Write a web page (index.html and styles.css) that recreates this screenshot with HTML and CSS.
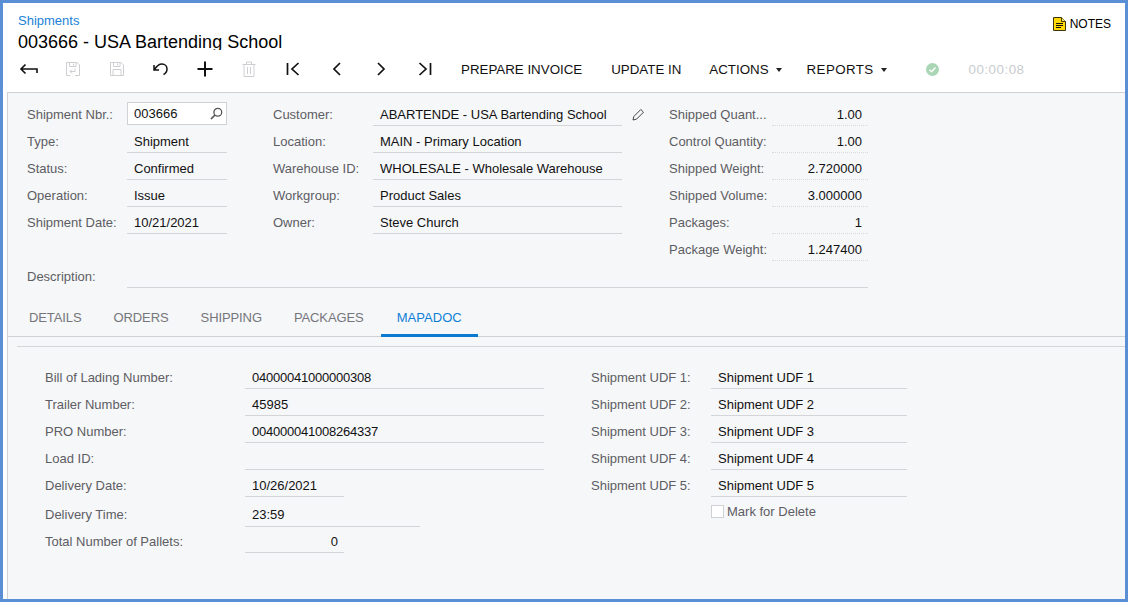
FILE: index.html
```html
<!DOCTYPE html>
<html lang="en">
<head>
<meta charset="utf-8">
<title>Shipments</title>
<link rel="stylesheet" href="styles.css">
</head>
<body>
<div class="frame">
  <header class="head">
    <div class="titles">
      <a class="crumb">Shipments</a>
      <h1 class="title">003666 - USA Bartending School</h1>
    </div>
    <div class="notes">
      <svg class="notes-icon" width="13" height="14" viewBox="0 0 13 14"><path d="M.5.5h8l4 4v9H.5z" fill="#ffd800" stroke="#3d3410"/><path d="M8.500.5v4h4" fill="#ffe95c" stroke="#3d3410"/><path d="M3 6.500h7M3 8.500h7M3 10.500h5" stroke="#111" fill="none"/></svg>
      <span>NOTES</span>
    </div>
  </header>
  <div class="toolbar">
    <span class="tool t1"><svg width="20" height="16" viewBox="0 0 20 16" fill="none" stroke="#111" stroke-width="1.600"><path d="M2 8h16v4M6.500 3.500 2 8l4.500 4.500"/></svg></span>
    <span class="tool t2"><svg width="16" height="16" viewBox="0 0 16 16" fill="none" stroke="#cfcdd2"><path d="M5.500 14.500H1.500V1.500H12L14.500 4V14.500H10M4.500 1.500V5.500H11V1.500M8.500 2.500V4.500M5 10.500H10V7.500M5 10.500L7 8.500M5 10.500L7 12.500"/></svg></span>
    <span class="tool t3"><svg width="16" height="16" viewBox="0 0 16 16" fill="none" stroke="#cfcdd2"><path d="M1.500 1.500H12L14.500 4V14.500H1.500ZM4.500 1.500V5.500H11V1.500M8.500 2.500V4.500M4 14.500V8.500H12V14.500"/></svg></span>
    <span class="tool t4"><svg width="18" height="16" viewBox="0 0 18 16" fill="none" stroke="#111" stroke-width="1.500"><path d="M2 4v5h5M2.500 8.500C5 4.500 7.500 3 10 3c3 0 5 2.200 5 5s-1.500 4.500-3.500 5.500"/></svg></span>
    <span class="tool t5"><svg width="16" height="16" viewBox="0 0 16 16" stroke="#111" stroke-width="2"><path d="M8 0.500V15.500M0.500 8H15.500"/></svg></span>
    <span class="tool t6"><svg width="14" height="16" viewBox="0 0 14 16" fill="none" stroke="#cfcdd2"><path d="M.5 3.500h13M4.500 3.500v-2.500h5v2.500M2 3.500v12h10v-12M5.500 6v7M8.500 6v7"/></svg></span>
    <span class="tool t7"><svg width="14" height="14" viewBox="0 0 14 14" fill="none" stroke="#111" stroke-width="1.700"><path d="M1.500 1V13M12.500 1 6 7l6.500 6"/></svg></span>
    <span class="tool t8"><svg width="10" height="14" viewBox="0 0 10 14" fill="none" stroke="#111" stroke-width="1.700"><path d="M8 1 2 7l6 6"/></svg></span>
    <span class="tool t9"><svg width="10" height="14" viewBox="0 0 10 14" fill="none" stroke="#111" stroke-width="1.700"><path d="M2 1l6 6-6 6"/></svg></span>
    <span class="tool t10"><svg width="14" height="14" viewBox="0 0 14 14" fill="none" stroke="#111" stroke-width="1.700"><path d="M12.500 1V13M1.500 1 8 7l-6.500 6"/></svg></span>
    <span class="cmd c1">PREPARE INVOICE</span>
    <span class="cmd c2">UPDATE IN</span>
    <span class="cmd c3">ACTIONS<i class="caret"></i></span>
    <span class="cmd c4">REPORTS<i class="caret"></i></span>
    <svg class="status" width="13" height="13" viewBox="0 0 13 13"><circle cx="6.500" cy="6.500" r="6.500" fill="#a9d6b4"/><path d="M3.500 6.800 5.600 8.800 9.500 4.500" fill="none" stroke="#fff" stroke-width="1.500"/></svg>
    <span class="timer">00:00:08</span>
  </div>

  <main class="panel">
    <section class="summary">
      <div class="col col-a">
        <div class="row"><label class="lbl">Shipment Nbr.:</label><div class="search"><span>003666</span><svg width="13" height="13" viewBox="0 0 13 13" fill="none" stroke="#555" stroke-width="1.300"><circle cx="7.800" cy="5.200" r="3.900"/><path d="M5 8 1 12" stroke-width="1.700"/></svg></div></div>
        <div class="row"><label class="lbl">Type:</label><div class="val">Shipment</div></div>
        <div class="row"><label class="lbl">Status:</label><div class="val">Confirmed</div></div>
        <div class="row"><label class="lbl">Operation:</label><div class="val">Issue</div></div>
        <div class="row"><label class="lbl">Shipment Date:</label><div class="val">10/21/2021</div></div>
      </div>
      <div class="col col-b">
        <div class="row"><label class="lbl">Customer:</label><div class="val">ABARTENDE - USA Bartending School</div><svg class="pencil" width="13" height="13" viewBox="0 0 13 13" fill="none" stroke="#444"><path d="M1 12 1.800 8.500 8.800 1.500 11.500 4.200 4.500 11.200Z"/></svg></div>
        <div class="row"><label class="lbl">Location:</label><div class="val">MAIN - Primary Location</div></div>
        <div class="row"><label class="lbl">Warehouse ID:</label><div class="val">WHOLESALE - Wholesale Warehouse</div></div>
        <div class="row"><label class="lbl">Workgroup:</label><div class="val">Product Sales</div></div>
        <div class="row"><label class="lbl">Owner:</label><div class="val">Steve Church</div></div>
      </div>
      <div class="col col-c">
        <div class="row"><label class="lbl">Shipped Quant...</label><div class="val num">1.00</div></div>
        <div class="row"><label class="lbl">Control Quantity:</label><div class="val num">1.00</div></div>
        <div class="row"><label class="lbl">Shipped Weight:</label><div class="val num">2.720000</div></div>
        <div class="row"><label class="lbl">Shipped Volume:</label><div class="val num">3.000000</div></div>
        <div class="row"><label class="lbl">Packages:</label><div class="val num">1</div></div>
        <div class="row"><label class="lbl">Package Weight:</label><div class="val num">1.247400</div></div>
      </div>
      <div class="row desc"><label class="lbl">Description:</label><div class="val"></div></div>
    </section>

    <nav class="tabs">
      <span class="tab">DETAILS</span>
      <span class="tab">ORDERS</span>
      <span class="tab">SHIPPING</span>
      <span class="tab">PACKAGES</span>
      <span class="tab active">MAPADOC</span>
    </nav>

    <section class="content">
      <div class="col col-l">
        <div class="row"><label class="lbl">Bill of Lading Number:</label><div class="val digits">04000041000000308</div></div>
        <div class="row"><label class="lbl">Trailer Number:</label><div class="val">45985</div></div>
        <div class="row"><label class="lbl">PRO Number:</label><div class="val digits">004000041008264337</div></div>
        <div class="row"><label class="lbl">Load ID:</label><div class="val"></div></div>
        <div class="row"><label class="lbl">Delivery Date:</label><div class="val short">10/26/2021</div></div>
        <div class="row gap"><label class="lbl">Delivery Time:</label><div class="val mid">23:59</div></div>
        <div class="row"><label class="lbl">Total Number of Pallets:</label><div class="val short num">0</div></div>
      </div>
      <div class="col col-r">
        <div class="row"><label class="lbl">Shipment UDF 1:</label><div class="val">Shipment UDF 1</div></div>
        <div class="row"><label class="lbl">Shipment UDF 2:</label><div class="val">Shipment UDF 2</div></div>
        <div class="row"><label class="lbl">Shipment UDF 3:</label><div class="val">Shipment UDF 3</div></div>
        <div class="row"><label class="lbl">Shipment UDF 4:</label><div class="val">Shipment UDF 4</div></div>
        <div class="row"><label class="lbl">Shipment UDF 5:</label><div class="val">Shipment UDF 5</div></div>
        <div class="check"><i class="box"></i><span>Mark for Delete</span></div>
      </div>
    </section>
  </main>
</div>
</body>
</html>
```

FILE: styles.css
```css
* { box-sizing: border-box; }
html, body { margin: 0; padding: 0; }
body { width: 1128px; height: 602px; overflow: hidden; font-family: "Liberation Sans", Arial, sans-serif; font-size: 13px; color: #000; background: #fff; }

.frame { width: 1128px; height: 602px; border: 3px solid #5a8fd6; display: flex; flex-direction: column; background: #fff; }

.head { display: flex; justify-content: space-between; height: 47px; padding: 10px 14px 0 15px; flex: none; }
.crumb { display: block; color: #1a82d6; font-size: 13px; line-height: 15px; }
.title { margin: 4px 0 0; height: 18px; overflow: hidden; font-size: 18px; line-height: 20px; font-weight: 400; color: #000; }
.notes { display: flex; align-items: center; gap: 4px; height: 21px; font-size: 12px; }
.notes-icon { display: block; }

.toolbar { display: flex; align-items: center; height: 42px; flex: none; padding-bottom: 4px; }
.tool { display: flex; align-items: center; justify-content: center; width: 44px; flex: none; }
.t1 { margin-left: 4px; }
.cmd { font-size: 13.330px; color: #111; flex: none; white-space: nowrap; }
.c1 { margin-left: 14px; }
.c2 { margin-left: 29px; }
.c3 { margin-left: 28px; }
.c4 { margin-left: 25px; letter-spacing: 0.4px; }
.caret { display: inline-block; margin-left: 7px; vertical-align: 2px; border: 3.500px solid transparent; border-top: 4px solid #222; border-bottom: 0; }
.status { margin-left: 39px; flex: none; }
.timer { margin-left: 30px; color: #c9cbce; font-size: 13.330px; letter-spacing: 0.5px; }

.panel { flex: 1; margin-left: 4px; background: #f6f7f9; border-top: 1px solid #cfd1d4; border-left: 1px solid #cfd1d4; display: flex; flex-direction: column; min-height: 0; }

.row { display: flex; align-items: flex-start; height: 27px; }
.lbl { color: #5d5d63; line-height: 15px; padding-top: 7px; white-space: nowrap; flex: none; }
.val { border-bottom: 1px solid #d4d5d8; padding: 7px 7px 0; line-height: 15px; height: 26px; color: #111; white-space: nowrap; }
.num { text-align: right; padding-right: 6px; }
.digits { letter-spacing: -0.23px; }

.summary { display: grid; grid-template-columns: 246px 396px 199px; grid-template-rows: 162px 27px; padding: 7px 0 0 19px; height: 209px; flex: none; }
.col-a .lbl { width: 100px; }
.col-a .val { width: 100px; }
.search { width: 100px; height: 23px; margin-top: 2px; border: 1px solid #cfd1d4; background: #fff; display: flex; align-items: center; justify-content: space-between; padding: 0 3px 0 6px; color: #111; }
.col-b .lbl { width: 100px; }
.col-b .val { width: 249px; }
.pencil { margin: 8px 0 0 10px; flex: none; }
.col-c .lbl { width: 103px; }
.col-c .val { width: 96px; border-bottom: 1px dotted #d9dadc; }
.desc { grid-column: 1 / -1; }
.desc .lbl { width: 100px; }
.desc .val { width: 741px; }

.tabs { display: flex; height: 35px; flex: none; padding-left: 5px; border-bottom: 1px solid #cfd1d4; }
.tab { padding: 8px 16px 0; line-height: 15px; font-size: 13px; letter-spacing: -0.1px; color: #75767b; }
.tab.active { color: #0f7fd6; border-bottom: 3px solid #0a7ad0; height: 35px; margin-left: 1px; letter-spacing: 0.05px; }

.content { margin: 9px 0 0 9px; border-top: 1px solid #d4d5d8; padding: 16px 0 0 28px; display: flex; }
.col-l { width: 546px; }
.col-l .lbl { width: 200px; }
.col-l .val { width: 299px; }
.col-l .short { width: 99px; }
.col-l .mid { width: 175px; height: 27px; }
.col-l .gap { margin-top: 2px; }
.col-r .lbl { width: 120px; }
.col-r .val { width: 196px; }
.check { display: flex; align-items: center; gap: 3px; margin: 6px 0 0 120px; color: #5d5d63; line-height: 15px; }
.box { width: 13px; height: 13px; background: #fff; border: 1px solid #cfd1d4; }
```
